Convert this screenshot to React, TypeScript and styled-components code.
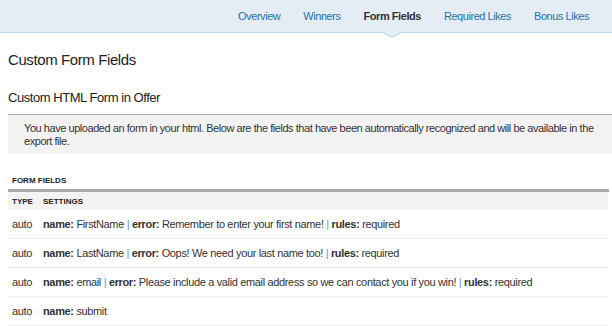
import styled, { createGlobalStyle } from "styled-components"

const Global = createGlobalStyle`
    body {
        margin: 0;
        background: #fff;
        font-family: "Liberation Sans", Tahoma, sans-serif;
        font-size: 11px;
        letter-spacing: -0.35px;
        color: #333;
    }
`

const Nav = styled.div`
    display: flex;
    justify-content: flex-end;
    align-items: center;
    height: 32px;
    background: #e4edf5;
    border-bottom: 1px solid #bcdcf2;
    padding-right: 23px;
    gap: 23px;
    letter-spacing: -0.45px;
`

const Tab = styled.a<{ $active?: boolean }>`
    position: relative;
    color: ${(p) => (p.$active ? "#333" : "#2a6fa5")};
    font-weight: ${(p) => (p.$active ? "bold" : "normal")};
    text-decoration: none;
    line-height: 32px;

    ${(p) =>
        p.$active &&
        `
        &::after {
            content: "";
            position: absolute;
            left: 50%;
            bottom: -6px;
            margin-left: -9px;
            width: 0;
            height: 0;
            border-left: 9px solid transparent;
            border-right: 9px solid transparent;
            border-top: 5px solid #bcdcf2;
        }
        &::before {
            content: "";
            position: absolute;
            left: 50%;
            bottom: -5px;
            margin-left: -8px;
            width: 0;
            height: 0;
            border-left: 8px solid transparent;
            border-right: 8px solid transparent;
            border-top: 5px solid #e4edf5;
            z-index: 1;
        }
    `}
`

const Content = styled.div`
    padding: 0 0 0 8px;
`

const Title = styled.h1`
    margin: 17px 0 0;
    font-size: 15px;
    letter-spacing: -0.4px;
    font-weight: normal;
    color: #222;
    line-height: 20px;
`

const Subtitle = styled.h2`
    margin: 20px 0 0;
    font-size: 13px;
    letter-spacing: -0.45px;
    font-weight: normal;
    color: #222;
    line-height: 16px;
    padding-bottom: 8px;
    border-bottom: 1px solid #aaa;
`

const Notice = styled.div`
    background: #f3f3f3;
    padding: 7px 4px 6px 16px;
    line-height: 13px;
    letter-spacing: -0.45px;
    color: #333;
`

const SectionLabel = styled.div`
    margin-top: 22px;
    font-size: 8px;
    letter-spacing: 0;
    font-weight: bold;
    color: #222;
    padding: 0 0 4px 4px;
    margin-right: 3px;
    border-bottom: 3px solid #aaa;
`

const Table = styled.table`
    width: calc(100% - 4px);
    border-collapse: collapse;
`

const Th = styled.th`
    background: #f3f3f3;
    text-align: left;
    font-size: 8px;
    letter-spacing: 0;
    font-weight: bold;
    color: #222;
    height: 18px;
    padding: 0 0 0 4px;
    &:first-child {
        width: 27px;
    }
`

const Td = styled.td`
    height: 28px;
    padding: 0 0 0 4px;
    border-bottom: 1px solid #ececec;
    color: #333;
`

const Key = styled.b`
    color: #333;
`

const Sep = styled.span`
    color: #5b9bd1;
`

interface Field {
    name: string
    error?: string
    rules?: string
}

const fields: Field[] = [
    { name: "FirstName", error: "Remember to enter your first name!", rules: "required" },
    { name: "LastName", error: "Oops! We need your last name too!", rules: "required" },
    { name: "email", error: "Please include a valid email address so we can contact you if you win!", rules: "required" },
    { name: "submit" },
]

const tabs = ["Overview", "Winners", "Form Fields", "Required Likes", "Bonus Likes"]

const App = () => {
    return (
        <>
            <Global />
            <Nav>
                {tabs.map((t) => (
                    <Tab key={t} $active={t === "Form Fields"}>
                        {t}
                    </Tab>
                ))}
            </Nav>
            <Content>
                <Title>Custom Form Fields</Title>
                <Subtitle>Custom HTML Form in Offer</Subtitle>
                <Notice>
                    You have uploaded an form in your html. Below are the fields that have been automatically
                    recognized and will be available in the export file.
                </Notice>
                <SectionLabel>FORM FIELDS</SectionLabel>
                <Table>
                    <thead>
                        <tr>
                            <Th>TYPE</Th>
                            <Th>SETTINGS</Th>
                        </tr>
                    </thead>
                    <tbody>
                        {fields.map((f) => (
                            <tr key={f.name}>
                                <Td>auto</Td>
                                <Td>
                                    <Key>name:</Key> {f.name}
                                    {f.error && (
                                        <>
                                            {" "}<Sep>|</Sep> <Key>error:</Key> {f.error}
                                        </>
                                    )}
                                    {f.rules && (
                                        <>
                                            {" "}<Sep>|</Sep> <Key>rules:</Key> {f.rules}
                                        </>
                                    )}
                                </Td>
                            </tr>
                        ))}
                    </tbody>
                </Table>
            </Content>
        </>
    )
}

export default App
